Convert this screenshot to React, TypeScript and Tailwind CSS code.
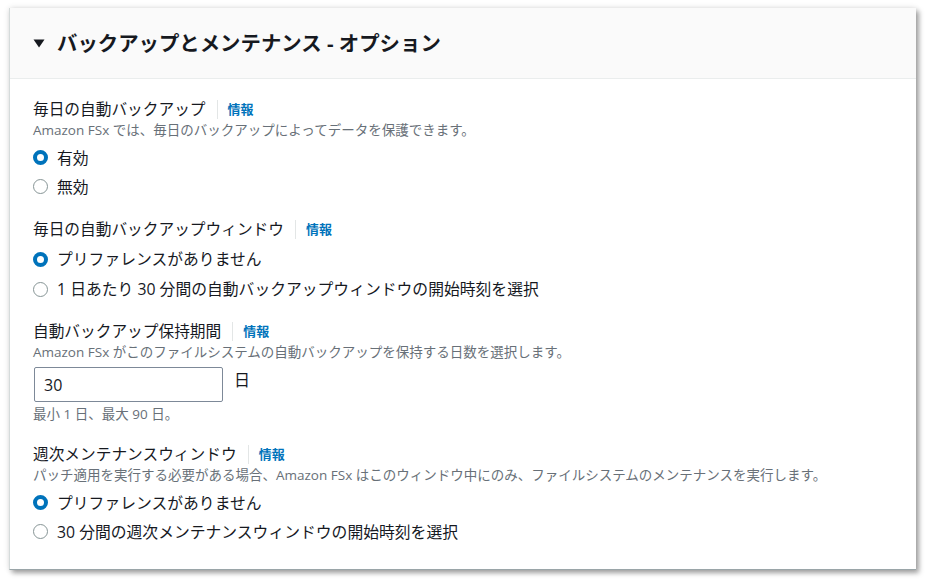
import React from "react";

const font = "font-['Open_Sans','Noto_Sans_CJK_JP',sans-serif]";

const Label = ({ text }: { text: string }) => (
  <div className="flex h-[22px] items-center">
    <span className="text-[15.7px] leading-[22px] text-[#16191f]">{text}</span>
    <span className="ml-[11px] mr-[10px] h-[19px] w-px bg-[#e3e6e6]" />
    <a className="text-[13px] font-bold leading-[22px] text-[#0073bb]">情報</a>
  </div>
);

const Desc = ({ text }: { text: string }) => (
  <div className="flex h-[20px] items-center text-[13.5px] leading-[20px] text-[#687078]">{text}</div>
);

const Radio = ({ label, checked, h = "h-[29px]" }: { label: string; checked?: boolean; h?: string }) => (
  <div className={`flex ${h} items-center`}>
    {checked ? (
      <span className="h-[15px] w-[15px] rounded-full border-[4.5px] border-[#0073bb] bg-white" />
    ) : (
      <span className="h-[15px] w-[15px] rounded-full border-[1.5px] border-[#879596] bg-white" />
    )}
    <span className="ml-[9px] text-[15.8px] leading-[22px] text-[#16191f]">{label}</span>
  </div>
);

export default function App() {
  return (
    <div className={`h-[586px] w-[929px] bg-white pl-[9px] pt-[8px] ${font}`}>
      <div className="h-[562px] w-[907px] border-b border-l border-[#d5dbdb] border-b-[#9aa5a8] bg-white shadow-[3px_3px_5px_rgba(0,0,0,0.35),0_0_6px_rgba(0,0,0,0.12)]">
        <div className="flex h-[71px] items-center border-b border-[#eaeded] bg-[#fafafa] pl-[23px]">
          <svg width="12" height="9" viewBox="0 0 12 9">
            <path d="M0.5 0.5 L11.5 0.5 L6 8.5 Z" fill="#16191f" />
          </svg>
          <h2 className="ml-[12px] text-[20.4px] font-bold leading-[28px] text-[#16191f]">
            バックアップとメンテナンス - オプション
          </h2>
        </div>
        <div className="pl-[23px] pt-[19px]">
          <section>
            <Label text="毎日の自動バックアップ" />
            <Desc text="Amazon FSx では、毎日のバックアップによってデータを保護できます。" />
            <div className="mt-[3px]">
              <Radio label="有効" checked />
              <Radio label="無効" />
            </div>
          </section>
          <section className="mt-[17px]">
            <Label text="毎日の自動バックアップウィンドウ" />
            <div className="mt-[4px]">
              <Radio label="プリファレンスがありません" checked h="h-[30px]" />
              <Radio label="1 日あたり 30 分間の自動バックアップウィンドウの開始時刻を選択" h="h-[30px]" />
            </div>
          </section>
          <section className="mt-[16px]">
            <Label text="自動バックアップ保持期間" />
            <Desc text="Amazon FSx がこのファイルシステムの自動バックアップを保持する日数を選択します。" />
            <div className="mt-[5px] flex items-start">
              <div className="ml-px flex h-[35px] w-[189px] items-center rounded-[2px] border border-[#7d8998] bg-white px-[9px] text-[16px] text-[#16191f]">
                30
              </div>
              <span className="ml-[11px] mt-[1px] text-[16px] leading-[24px] text-[#16191f]">日</span>
            </div>
            <div className="mt-[2px]">
              <Desc text="最小 1 日、最大 90 日。" />
            </div>
          </section>
          <section className="mt-[19px]">
            <Label text="週次メンテナンスウィンドウ" />
            <Desc text="パッチ適用を実行する必要がある場合、Amazon FSx はこのウィンドウ中にのみ、ファイルシステムのメンテナンスを実行します。" />
            <div className="mt-[3px]">
              <Radio label="プリファレンスがありません" checked />
              <Radio label="30 分間の週次メンテナンスウィンドウの開始時刻を選択" />
            </div>
          </section>
        </div>
      </div>
    </div>
  );
}
